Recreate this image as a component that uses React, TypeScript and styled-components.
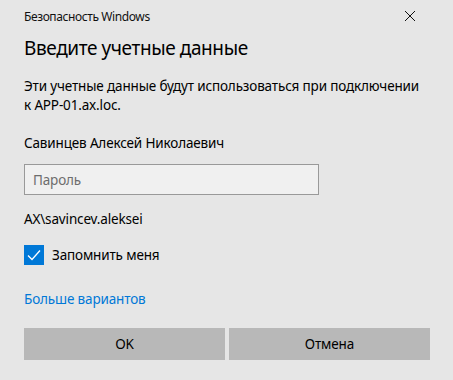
import styled, { createGlobalStyle } from 'styled-components'

const GlobalStyles = createGlobalStyle`
  html, body {
    margin: 0;
    padding: 0;
    background: #e6e6e6;
  }
  body {
    font-family: "Noto Sans", "Open Sans", sans-serif;
    color: #000;
  }
`

const Dialog = styled.div`
  width: 453px;
  height: 380px;
  box-sizing: border-box;
  padding: 0 23px 0 24px;
  background: #e6e6e6;
  display: flex;
  flex-direction: column;
`

const TitleBar = styled.div`
  display: flex;
  align-items: center;
  justify-content: space-between;
  height: 30px;
  padding-top: 2px;
  box-sizing: border-box;
`

const Caption = styled.span`
  font-size: 12px;
  letter-spacing: -0.4px;
  color: #111;
`

const CloseButton = styled.button`
  border: 0;
  background: transparent;
  padding: 0;
  margin-right: 14px;
  width: 12px;
  height: 12px;
  display: flex;
  color: #111;
`

const Heading = styled.h1`
  margin: 4px 0 0;
  font-size: 19px;
  letter-spacing: -0.4px;
  font-weight: 400;
  line-height: 28px;
`

const Text = styled.p<{ $top?: number }>`
  margin: ${({ $top }) => $top ?? 0}px 0 0;
  font-size: 13.5px;
  letter-spacing: -0.15px;
  line-height: 19px;
  white-space: nowrap;
`

const Field = styled.input`
  margin-top: 11px;
  width: 295px;
  height: 31px;
  box-sizing: border-box;
  border: 1px solid #999;
  background: #f0f0f0;
  padding: 0 8px;
  font: inherit;
  font-size: 13.5px;
  letter-spacing: -0.15px;
  outline: none;
  &::placeholder {
    color: #6d6d6d;
  }
`

const CheckRow = styled.label`
  display: flex;
  align-items: center;
  gap: 8px;
  margin-top: 16px;
  font-size: 13.5px;
  letter-spacing: -0.15px;
`

const Box = styled.span`
  width: 20px;
  height: 20px;
  background: #0078d7;
  display: flex;
  align-items: center;
  justify-content: center;
`

const Link = styled.a`
  margin-top: 25px;
  font-size: 13.5px;
  letter-spacing: -0.15px;
  line-height: 19px;
  color: #0078d7;
  text-decoration: none;
  align-self: flex-start;
`

const Buttons = styled.div`
  display: grid;
  grid-template-columns: 1fr 1fr;
  gap: 4px;
  margin-top: 19px;
  width: 406px;
`

const Btn = styled.button`
  height: 32px;
  border: 0;
  background: #b8b8b8;
  font: inherit;
  font-size: 13.5px;
  letter-spacing: -0.15px;
  color: #000;
`

export default function App() {
  return (
    <>
      <GlobalStyles />
      <Dialog>
        <TitleBar>
          <Caption>Безопасность Windows</Caption>
          <CloseButton aria-label="Закрыть">
            <svg width="12" height="12" viewBox="0 0 12 12">
              <path d="M1 1L11 11M11 1L1 11" stroke="currentColor" strokeWidth="1" />
            </svg>
          </CloseButton>
        </TitleBar>
        <Heading>Введите учетные данные</Heading>
        <Text $top={15}>
          Эти учетные данные будут использоваться при подключении
          <br />к APP-01.ax.loc.
        </Text>
        <Text $top={19}>Савинцев Алексей Николаевич</Text>
        <Field type="password" placeholder="Пароль" />
        <Text $top={15}>AX\savincev.aleksei</Text>
        <CheckRow>
          <Box>
            <svg width="14" height="12" viewBox="0 0 14 12">
              <path d="M1 6.5L5 10.5L13 1.5" stroke="#fff" strokeWidth="1.3" fill="none" />
            </svg>
          </Box>
          Запомнить меня
        </CheckRow>
        <Link href="#">Больше вариантов</Link>
        <Buttons>
          <Btn>OK</Btn>
          <Btn>Отмена</Btn>
        </Buttons>
      </Dialog>
    </>
  )
}
